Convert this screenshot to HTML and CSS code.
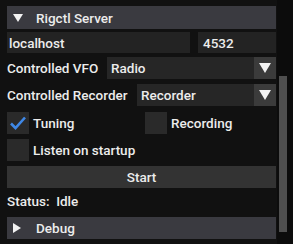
FILE: index.html
```html
<!DOCTYPE html>
<html lang="en">
<head>
  <meta charset="UTF-8">
  <title>Rigctl Server</title>
  <link rel="stylesheet" href="styles.css">
</head>
<body>
  <div class="panel">
    <div class="header"><span class="tri-down"></span>Rigctl Server</div>
    <div class="row host-row">
      <div class="input host">localhost</div>
      <div class="input port">4532</div>
    </div>
    <div class="row vfo-row">
      <span class="label">Controlled VFO</span>
      <div class="combo vfo"><span class="value">Radio</span><span class="arrow"><span class="tri-down small"></span></span></div>
    </div>
    <div class="row rec-row">
      <span class="label">Controlled Recorder</span>
      <div class="combo rec"><span class="value">Recorder</span><span class="arrow"><span class="tri-down small"></span></span></div>
    </div>
    <div class="row check-row">
      <div class="check tuning">
        <span class="box">
          <svg width="22" height="22" viewBox="0 0 22 22"><path d="M4 11.5 L8.5 16 L18 5.5" fill="none" stroke="#3f88e6" stroke-width="2.6"/></svg>
        </span>Tuning
      </div>
      <div class="check recording"><span class="box"></span>Recording</div>
    </div>
    <div class="row listen-row">
      <div class="check"><span class="box"></span>Listen on startup</div>
    </div>
    <div class="button">Start</div>
    <div class="status">Status:&nbsp; Idle</div>
    <div class="header debug"><span class="tri-right"></span>Debug</div>
  </div>
  <div class="scrollbar"><div class="thumb"></div></div>
</body>
</html>
```

FILE: styles.css
```css
body {
  margin: 0;
  width: 293px;
  height: 244px;
  background: #111111;
  font-family: Roboto, "Noto Sans", sans-serif;
  font-weight: 500;
  font-size: 13.5px;
  color: #ececec;
  overflow: hidden;
  position: relative;
}
.panel {
  width: 269px;
  padding: 6px 0 0 7px;
  display: flex;
  flex-direction: column;
}
.header {
  height: 23px;
  background: #3a3a40;
  display: flex;
  align-items: center;
  padding-left: 6px;
}
.tri-down {
  width: 0;
  height: 0;
  border-left: 5px solid transparent;
  border-right: 5px solid transparent;
  border-top: 8px solid #f2f2f2;
  margin-right: 13px;
}
.tri-down.small {
  margin: 0;
  border-left-width: 6px;
  border-right-width: 6px;
  border-top-width: 10px;
}
.tri-right {
  width: 0;
  height: 0;
  border-top: 5px solid transparent;
  border-bottom: 5px solid transparent;
  border-left: 8px solid #f2f2f2;
  margin-right: 15px;
}
.row {
  display: flex;
  align-items: center;
}
.host-row {
  margin-top: 3px;
  height: 21px;
  gap: 8px;
}
.input {
  background: #232323;
  height: 21px;
  display: flex;
  align-items: center;
  padding-left: 2px;
  box-sizing: border-box;
}
.host { width: 183px; }
.port { flex: 1; padding-left: 5px; }
.vfo-row { margin-top: 4px; height: 22px; }
.rec-row { margin-top: 5px; height: 22px; }
.label { width: 100px; flex: none; }
.rec-row .label { width: 130px; }
.combo {
  flex: 1;
  height: 22px;
  background: #262626;
  display: flex;
  align-items: center;
}
.combo .value { flex: 1; padding-left: 4px; }
.combo .arrow {
  width: 22px;
  height: 22px;
  background: #3b3b3b;
  display: flex;
  align-items: center;
  justify-content: center;
}
.check-row { margin-top: 6px; height: 22px; }
.listen-row { margin-top: 5px; height: 22px; }
.check {
  display: flex;
  align-items: center;
  height: 22px;
}
.tuning { width: 138px; }
.box {
  width: 22px;
  height: 22px;
  background: #2a2a2a;
  margin-right: 4px;
  display: block;
}
.box svg { display: block; }
.button {
  margin-top: 5px;
  height: 22px;
  background: #333333;
  display: flex;
  align-items: center;
  justify-content: center;
}
.status {
  height: 24px;
  display: flex;
  align-items: center;
  margin-top: 1px;
}
.debug {
  margin-top: 4px;
  height: 22px;
}
.scrollbar {
  position: absolute;
  left: 277px;
  top: 0;
  width: 16px;
  height: 244px;
  background: #0c0c0c;
}
.thumb {
  position: absolute;
  left: 2px;
  top: 76px;
  width: 8px;
  height: 156px;
  background: #4f4f4f;
}
```
